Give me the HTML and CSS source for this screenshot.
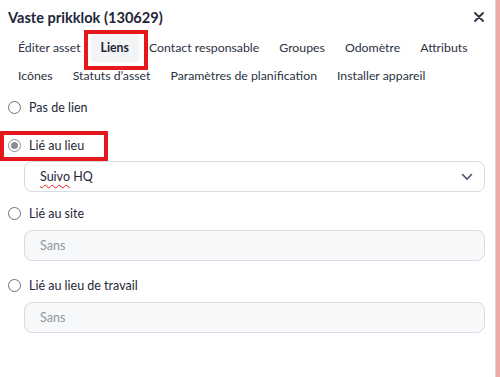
FILE: index.html
```html
<!DOCTYPE html>
<html lang="fr">
<head>
<meta charset="UTF-8">
<title>Vaste prikklok</title>
<link rel="stylesheet" href="styles.css">
</head>
<body>
    <div class="modal">
        <div class="head">
            <h1 class="title">Vaste prikklok (130629)</h1>
            <span class="close">
                <svg width="10" height="10" viewBox="0 0 10 10"><path d="M1 1L9 9M9 1L1 9" stroke="#2b3445" stroke-width="1.8" stroke-linecap="round"/></svg>
            </span>
        </div>
        <ul class="tabs">
            <li>Éditer asset</li>
            <li class="active mark">Liens</li>
            <li>Contact responsable</li>
            <li>Groupes</li>
            <li>Odomètre</li>
            <li>Attributs</li>
            <li>Icônes</li>
            <li>Statuts d’asset</li>
            <li>Paramètres de planification</li>
            <li>Installer appareil</li>
        </ul>
        <div class="links">
            <label class="opt"><span class="radio"></span>Pas de lien</label>

            <label class="opt checked mark"><span class="radio"></span>Lié au lieu</label>
            <div class="field select">
                <span class="spell">Suivo</span>&nbsp;HQ
                <svg class="chev" width="12" height="8" viewBox="0 0 12 8"><path d="M1.5 1.5L6 6L10.5 1.5" fill="none" stroke="#4a5568" stroke-width="1.6" stroke-linecap="round"/></svg>
            </div>

            <label class="opt"><span class="radio"></span>Lié au site</label>
            <div class="field disabled">Sans</div>

            <label class="opt"><span class="radio"></span>Lié au lieu de travail</label>
            <div class="field disabled">Sans</div>
        </div>
    </div>
    <div class="edge"></div>
</body>
</html>
```

FILE: styles.css
```css
* {
    margin: 0;
    padding: 0;
    box-sizing: border-box;
}
body {
    display: flex;
    height: 377px;
    overflow: hidden;
    background: #fff;
    font-family: Lato, "Noto Sans", sans-serif;
    color: #1e2638;
}
.modal {
    width: 496px;
    border-right: 1px solid #d3d7de;
    padding: 0 8px;
}
.edge {
    flex: 1;
    background: #eea9a6;
}
.head {
    height: 34px;
    display: flex;
    align-items: center;
    justify-content: space-between;
}
.title {
    font-size: 14.6px;
    font-weight: 700;
}
.close {
    display: flex;
    margin-right: 3px;
}
.tabs {
    list-style: none;
    display: flex;
    flex-wrap: wrap;
    margin-right: -6px;
}
.tabs li {
    position: relative;
    padding: 6px 10px;
    font-size: 12.3px;
    line-height: 16px;
    color: #2a3242;
    border-radius: 3px;
}
.tabs li.active {
    font-weight: 700;
    background: #f3f4f6;
    color: #1e2638;
}
.mark::after {
    content: "";
    position: absolute;
    border: 4px solid #e3191e;
}
.tabs li.mark::after {
    left: -7px;
    right: -9px;
    top: -4px;
    bottom: -8px;
}
.links {
    padding-top: 7px;
}
.opt {
    position: relative;
    display: flex;
    align-items: center;
    height: 20px;
    font-size: 12.5px;
    color: #1e2638;
}
.opt + .opt {
    margin-top: 18px;
}
.select + .opt {
    margin-top: 11px;
}
.disabled + .opt {
    margin-top: 14px;
}
.radio {
    width: 13px;
    height: 13px;
    border: 1px solid #6b6f76;
    border-radius: 50%;
    margin-right: 8px;
    display: flex;
    align-items: center;
    justify-content: center;
}
.checked .radio {
    border-color: #8a8d92;
}
.checked .radio::before {
    content: "";
    width: 7px;
    height: 7px;
    border-radius: 50%;
    background: #8a8d92;
}
.opt.mark::after {
    left: -8px;
    width: 100px;
    top: -4px;
    bottom: -6px;
}
.field {
    display: flex;
    align-items: center;
    height: 31px;
    margin: 6px 2px 0 16px;
    padding: 0 15px;
    border: 1px solid #d6dce4;
    border-radius: 8px;
    font-size: 12.5px;
}
.chev {
    margin-left: auto;
    margin-right: -4px;
}
.spell {
    text-decoration: underline wavy #e3191e;
    text-decoration-thickness: 1px;
    text-underline-offset: 3px;
}
.disabled {
    background: #f7f8fa;
    color: #9097a1;
    margin-top: 7px;
}
```
